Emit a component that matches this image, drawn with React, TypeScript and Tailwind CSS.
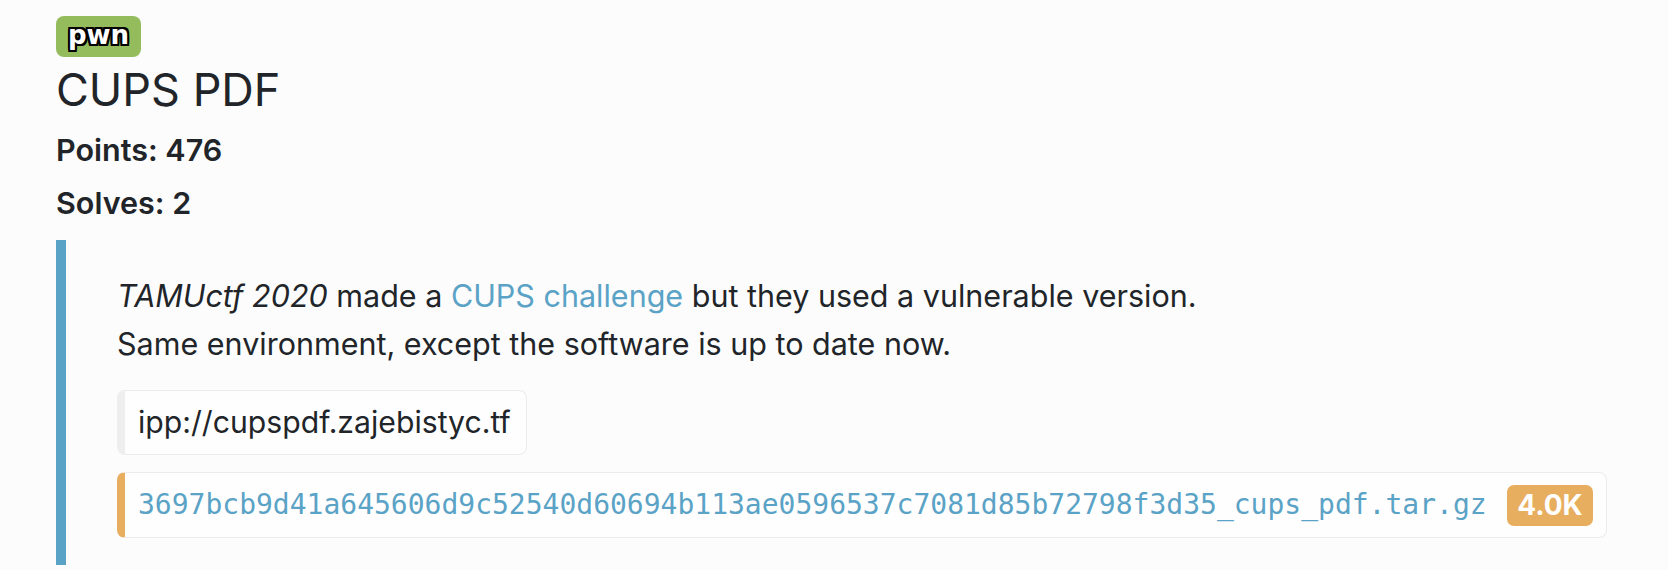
const sans = "font-['Inter','Liberation_Sans',Arial,sans-serif]";

const outline =
  '[text-shadow:2px_0_0_#000,-2px_0_0_#000,0_2px_0_#000,0_-2px_0_#000,2px_2px_0_#000,-2px_-2px_0_#000,2px_-2px_0_#000,-2px_2px_0_#000]';

export default function App() {
  return (
    <div className={`min-h-screen bg-[#fcfcfc] px-[56px] pt-[16px] text-[#212529] ${sans}`}>
      <div className="flex">
        <span
          className={`flex h-[41px] w-[85px] items-center justify-center rounded-[8px] bg-[#95bc5c] pb-[2px] font-['DejaVu_Sans',sans-serif] text-[26px] font-bold text-white ${outline}`}
        >
          pwn
        </span>
      </div>

      <h1 className="mt-[6px] text-[45px] leading-[54px] font-normal">CUPS PDF</h1>

      <div className="mt-[6px] text-[30.5px] font-semibold leading-[53px]">
        <p>Points: 476</p>
        <p>Solves: 2</p>
      </div>

      <blockquote className="mt-[11px] border-l-[10px] border-[#5aa3c6] pt-[32px] pb-[27px] pl-[51px] pr-[5px]">
        <p className="text-[30.5px] leading-[48px]">
          <em>TAMUctf 2020</em> made a <a className="text-[#5aa3c6]">CUPS challenge</a> but they used a
          vulnerable version.
          <br />
          Same environment, except the software is up to date now.
        </p>

        <div className="mt-[22px] flex">
          <div className="rounded-[8px] border border-l-[8px] border-[#ebebeb] border-l-[#eeeeee] bg-[#fefefe] py-[7px] pr-[15px] pl-[13px] text-[30.2px] leading-[49px]">
            ipp://cupspdf.zajebistyc.tf
          </div>
        </div>

        <div className="mt-[17px] flex h-[66px] items-center justify-between rounded-[8px] border border-l-[8px] border-[#ebebeb] border-l-[#e8ae5f] bg-[#fefefe] pr-[13px] pl-[13px]">
          <a className="font-['DejaVu_Sans_Mono',monospace] text-[28px] text-[#5aa3c6]">
            3697bcb9d41a645606d9c52540d60694b113ae0596537c7081d85b72798f3d35_cups_pdf.tar.gz
          </a>
          <span className="flex h-[41px] w-[86px] items-center justify-center rounded-[7px] bg-[#e8ae5f] text-[28px] font-bold text-white">
            4.0K
          </span>
        </div>
      </blockquote>
    </div>
  );
}
